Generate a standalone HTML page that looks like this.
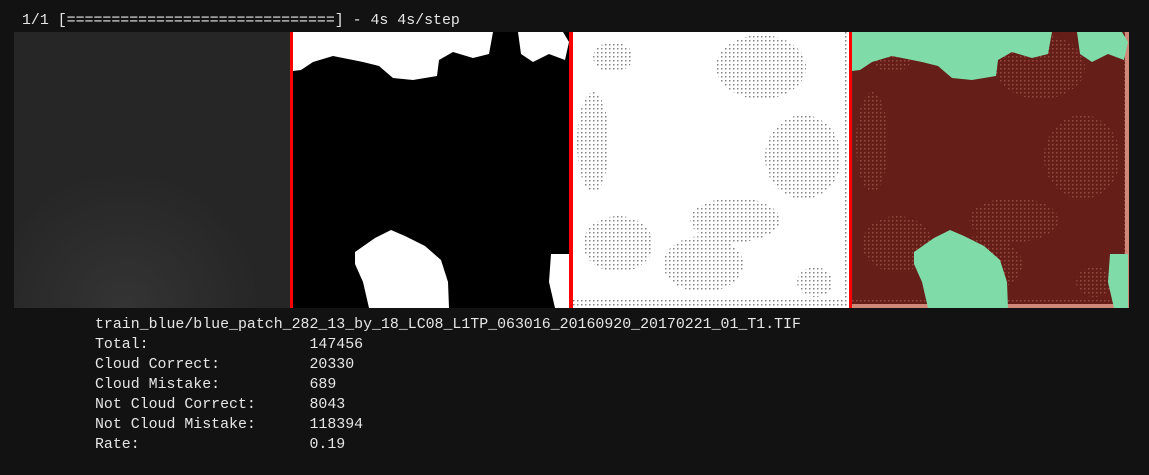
<!DOCTYPE html>
<html><head><meta charset="utf-8"><style>
html,body{margin:0;padding:0;background:#121212;width:1149px;height:475px;overflow:hidden}
.t{position:absolute;font-family:"Liberation Mono",monospace;font-size:14.9px;color:#e6e6e6;white-space:pre;line-height:20px}
svg{position:absolute;left:0;top:0}
</style></head><body>
<div class="t" style="left:22px;top:11px">1/1 [==============================] - 4s 4s/step</div>
<svg width="1149" height="475" viewBox="0 0 1149 475">
<defs>
<radialGradient id="g1" cx="0.4" cy="1" r="0.5">
<stop offset="0" stop-color="#343434"/><stop offset="1" stop-color="#262626"/></radialGradient>
<pattern id="pd" width="4" height="4" patternUnits="userSpaceOnUse"><rect width="1.5" height="1.5" fill="#333"/></pattern>
<pattern id="pp" width="4" height="4" patternUnits="userSpaceOnUse"><rect width="1.5" height="1.5" fill="#d08070"/></pattern>
<g id="blobs">
<path d="M0,0 H200 L196,22 180,26 160,20 146,28 144,44 120,48 100,46 86,34 70,30 40,24 20,30 8,38 0,39 Z"/>
<path d="M225,0 H270 L276,10 272,28 256,22 240,30 228,22 Z"/>
<path d="M62,220 L82,206 98,198 112,204 132,214 148,228 155,250 156,276 H76 L70,250 62,232 Z"/>
<path d="M258,222 H276 V276 H262 L256,250 Z"/>
</g>
<g id="spk">
<ellipse cx="188" cy="35" rx="45" ry="32"/>
<ellipse cx="20" cy="110" rx="16" ry="50"/>
<ellipse cx="230" cy="125" rx="38" ry="42"/>
<ellipse cx="162" cy="188" rx="45" ry="22"/>
<ellipse cx="45" cy="212" rx="35" ry="28"/>
<ellipse cx="130" cy="232" rx="40" ry="28"/>
<ellipse cx="242" cy="250" rx="18" ry="15"/>
<ellipse cx="40" cy="25" rx="20" ry="15"/>
<rect x="0" y="268" width="276" height="8"/>
<rect x="270" y="0" width="6" height="276"/>
</g>
</defs>
<rect x="14" y="32" width="276" height="276" fill="url(#g1)"/>
<rect x="290" y="32" width="3" height="276" fill="#f00"/>
<rect x="293" y="32" width="276" height="276" fill="#000"/>
<g transform="translate(293,32)" fill="#fff"><use href="#blobs"/></g>
<rect x="569" y="32" width="4" height="276" fill="#f00"/>
<rect x="573" y="32" width="276" height="276" fill="#fff"/>
<g transform="translate(573,32)" fill="url(#pd)" opacity="0.6"><use href="#spk"/></g>
<rect x="849" y="32" width="3" height="276" fill="#f00"/>
<rect x="852" y="32" width="277" height="276" fill="#661e18"/>
<g transform="translate(852,32)" fill="url(#pp)" opacity="0.45"><use href="#spk"/></g>
<rect x="1125" y="32" width="4" height="276" fill="#d08878"/>
<rect x="852" y="304" width="277" height="4" fill="#d08878"/>
<g transform="translate(852,32)" fill="#7fdca8"><use href="#blobs"/></g>
</svg>
<div class="t" style="left:95px;top:315px">train_blue/blue_patch_282_13_by_18_LC08_L1TP_063016_20160920_20170221_01_T1.TIF
Total:                  147456
Cloud Correct:          20330
Cloud Mistake:          689
Not Cloud Correct:      8043
Not Cloud Mistake:      118394
Rate:                   0.19</div>
</body></html>
